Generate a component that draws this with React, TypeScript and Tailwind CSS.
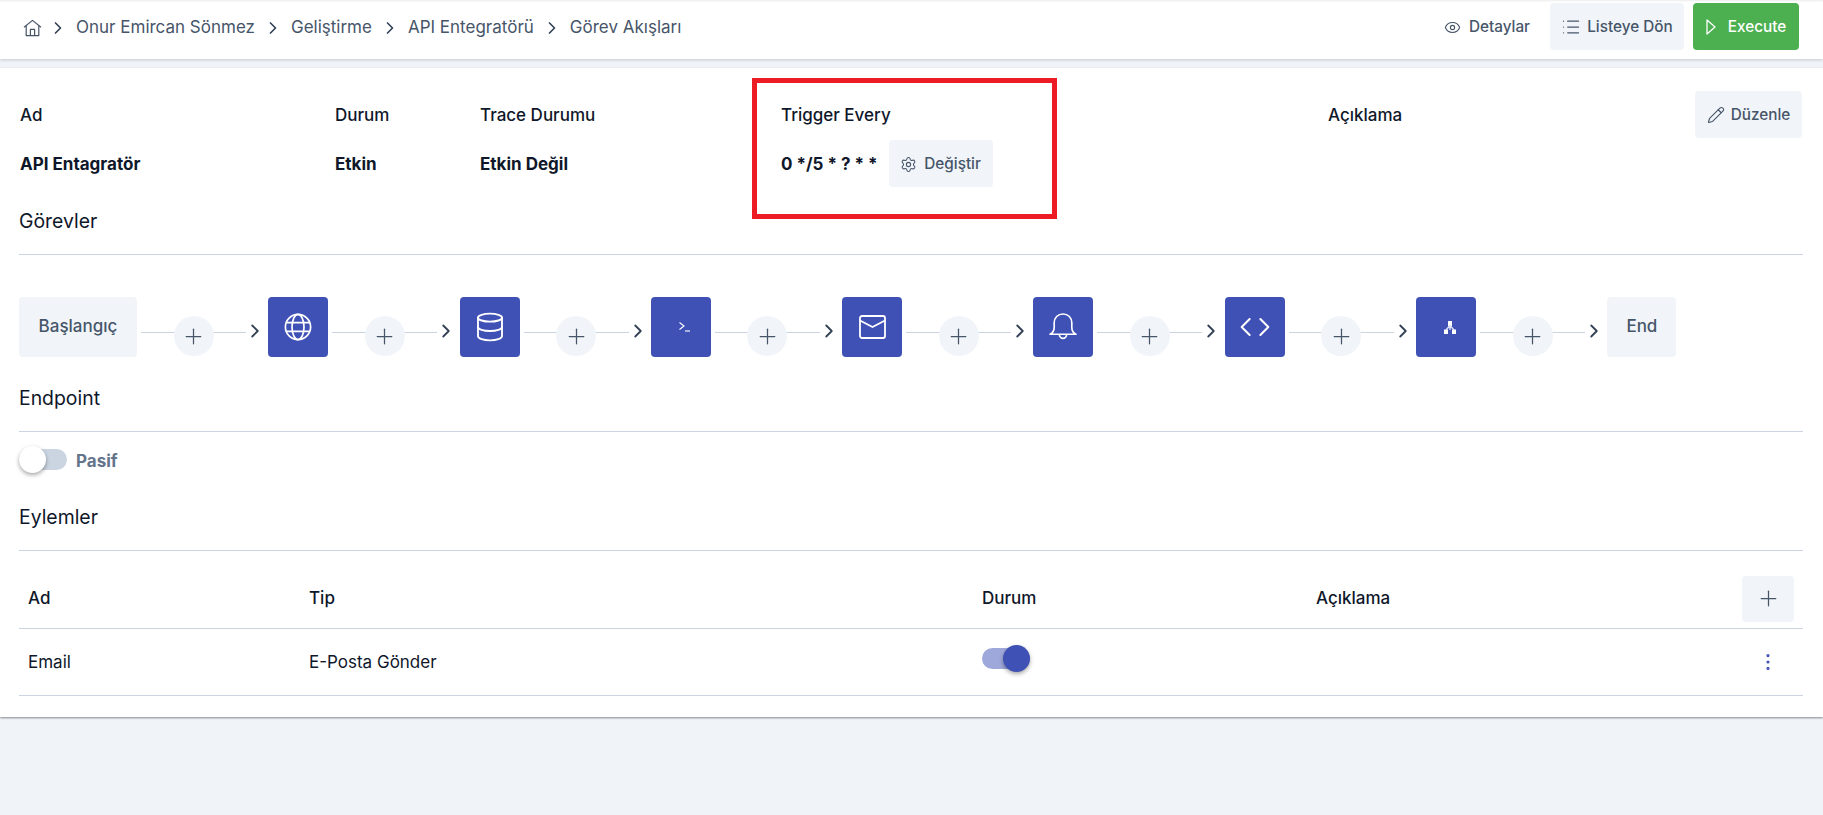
import { ChevronRight, Code, Database, EllipsisVertical, Eye, List, Pencil, Plus, Settings } from "lucide-react";
import type { ReactNode } from "react";

function HomeIcon() {
  return (
    <svg width="19" height="18" viewBox="0 0 19 18" fill="none" stroke="currentColor" strokeWidth="1.2" strokeLinejoin="round" className="-mr-[2px]">
      <path d="M1 8.2 9.5 1.4l8.5 6.8" />
      <path d="M3.2 6.6V16.6h12.6V6.6" />
      <path d="M7.4 16.6V10.4h4.2v6.2" />
    </svg>
  );
}

function PlayIcon() {
  return (
    <svg width="10" height="16" viewBox="0 0 10 16" fill="none" stroke="currentColor" strokeWidth="1.3" strokeLinejoin="round">
      <path d="M1 1v14l8-7z" />
    </svg>
  );
}

function GlobeIcon() {
  return (
    <svg width="28" height="28" viewBox="0 0 28 28" fill="none" stroke="currentColor" strokeWidth="1.7">
      <circle cx="14" cy="14" r="12.6" />
      <ellipse cx="14" cy="14" rx="6" ry="12.6" />
      <path d="M2.6 9.6h22.8M2.6 18.4h22.8" />
    </svg>
  );
}

function MailIcon() {
  return (
    <svg width="27" height="24" viewBox="0 0 27 24" fill="none" stroke="currentColor" strokeWidth="1.8" strokeLinejoin="round">
      <rect x="1" y="1" width="25" height="22" rx="2" />
      <path d="M1 5.5 13.5 12 26 5.5" />
    </svg>
  );
}

function BellIcon() {
  return (
    <svg width="30" height="28" viewBox="0 0 28 27" fill="none" stroke="currentColor" strokeWidth="1.6" strokeLinejoin="round">
      <path d="M1.5 20.5c2.4-1.2 4-2.6 4-6.5V9.5C5.5 4.6 9 1 14 1s8.500 3.600 8.500 8.500V14c0 3.900 1.600 5.300 4 6.500z" />
      <path d="M10.500 20.500a3.500 4 0 0 0 7 0" />
    </svg>
  );
}

function TerminalIcon() {
  return (
    <svg width="11" height="10" viewBox="0 0 11 10" fill="none" stroke="currentColor" strokeWidth="1.1" className="ml-2">
      <path d="M0.500 0.500 5 4 0.500 7.500" />
      <path d="M6 9h5" />
    </svg>
  );
}

function SitemapIcon() {
  return (
    <svg width="12" height="13" viewBox="0 0 12 13" fill="currentColor" className="ml-2">
      <rect x="4" y="0" width="4" height="5" />
      <rect x="0" y="8.500" width="4" height="4.500" />
      <rect x="8" y="8.500" width="4" height="4.500" />
      <path d="M6 5v4M6 4.500 2 9M6 4.500 10 9" stroke="#dfe3f5" strokeWidth="1.4" fill="none" />
    </svg>
  );
}

function GreyButton({ children, className }: { children: ReactNode; className: string }) {
  return (
    <button className={`flex items-center justify-center rounded bg-[#f1f5f9] text-[15.3px] font-medium text-[#475569] ${className}`}>
      {children}
    </button>
  );
}

function Connector() {
  return (
    <div className="flex w-[131.3px] shrink-0 items-start pl-1">
      <div className="relative flex w-[105px] shrink-0 justify-center">
        <div className="mt-[35px] h-px w-full bg-[#cbd5e1]" />
        <div className="absolute top-[19px] flex size-10 items-center justify-center rounded-full bg-[#f1f5f9] text-[#475569]">
          <Plus size={25} strokeWidth={1.2} />
        </div>
      </div>
      <ChevronRight size={22} strokeWidth={2} className="mt-[23px] -ml-[2px] shrink-0 text-[#334155]" />
    </div>
  );
}

function TaskNode({ children }: { children: ReactNode }) {
  return (
    <div className="flex h-[60px] w-[60px] shrink-0 items-center justify-center rounded bg-[#3f51b5] text-white">
      {children}
    </div>
  );
}

function SectionTitle({ children, className }: { children: ReactNode; className: string }) {
  return (
    <div className={`border-b border-[#cbd5e1] pb-[19px] text-[19.4px] leading-[27px] text-[#0f172a] ${className}`}>
      {children}
    </div>
  );
}

function Crumb({ children }: { children: ReactNode }) {
  return (
    <>
      <ChevronRight size={20} strokeWidth={2} className="mx-2 text-[#334155]" />
      <span>{children}</span>
    </>
  );
}

const tasks = [
  <GlobeIcon />,
  <Database size={32} strokeWidth={1.4} />,
  <TerminalIcon />,
  <MailIcon />,
  <BellIcon />,
  <Code size={32} strokeWidth={1.5} />,
  <SitemapIcon />,
];

export default function App() {
  return (
    <div className="relative min-h-[815px] bg-[#f0f4f9] font-['Inter',sans-serif] text-[#0f172a]">
      {/* Header */}
      <div className="flex h-[59px] items-center justify-between bg-white pr-6 pb-[6px] pl-[23px] shadow-[0_1px_3px_rgba(0,0,0,0.18),inset_0_2px_2px_-1px_rgba(0,0,0,0.08)]">
        <div className="mt-[2px] flex items-center text-[17px] text-[#475569]">
          <HomeIcon />
          <Crumb>Onur Emircan Sönmez</Crumb>
          <Crumb>Geliştirme</Crumb>
          <Crumb>API Entegratörü</Crumb>
          <Crumb>Görev Akışları</Crumb>
        </div>
        <div className="flex items-center gap-[9px] text-[15.3px] font-medium">
          <button className="flex h-[47px] items-center gap-[8px] pt-px pr-[11px] text-[#475569]">
            <Eye size={17} strokeWidth={1.6} />
            Detaylar
          </button>
          <GreyButton className="h-[47px] w-[134px] gap-[6px] pt-px">
            <List size={20} strokeWidth={1.5} />
            Listeye Dön
          </GreyButton>
          <button className="flex h-[47px] w-[106px] items-center justify-center gap-[12px] rounded bg-[#4caf50] pt-px text-white">
            <PlayIcon />
            Execute
          </button>
        </div>
      </div>

      {/* Main card */}
      <div className="mt-[9px] h-[649px] bg-white pr-5 pl-[19px] shadow-[0_1px_2px_rgba(0,0,0,0.45)]">
        {/* Summary row */}
        <div className="flex pt-[23px] text-[17px]">
          <div className="w-[316px] shrink-0 pl-px">
            <div className="flex h-[47px] items-center pt-[2px] font-medium">Ad</div>
            <div className="mt-[2px] flex h-[47px] items-center pt-[2px] font-bold">API Entagratör</div>
          </div>
          <div className="w-[145px] shrink-0">
            <div className="flex h-[47px] items-center pt-[2px] font-medium">Durum</div>
            <div className="mt-[2px] flex h-[47px] items-center pt-[2px] font-bold">Etkin</div>
          </div>
          <div className="w-[301px] shrink-0">
            <div className="flex h-[47px] items-center pt-[2px] font-medium">Trace Durumu</div>
            <div className="mt-[2px] flex h-[47px] items-center pt-[2px] font-bold">Etkin Değil</div>
          </div>
          <div className="w-[547px] shrink-0">
            <div className="flex h-[47px] items-center pt-[2px] font-medium">Trigger Every</div>
            <div className="mt-[2px] flex h-[47px] items-center gap-[11px] font-bold">
              <span className="pt-[2px]">0 */5 * ? * *</span>
              <GreyButton className="h-[47px] w-[104px] gap-[7px] pt-px">
                <Settings size={17} strokeWidth={1.5} />
                Değiştir
              </GreyButton>
            </div>
          </div>
          <div className="flex h-[47px] flex-1 items-center pt-[2px] font-medium">Açıklama</div>
          <GreyButton className="mr-px h-[47px] w-[107px] gap-[6px] pt-px">
            <Pencil size={18} strokeWidth={1.5} />
            Düzenle
          </GreyButton>
        </div>

        <SectionTitle className="mt-[21px]">Görevler</SectionTitle>

        {/* Task flow */}
        <div className="mt-[42px] flex h-[60px] items-start">
          <div className="flex h-[60px] w-[118px] shrink-0 items-center justify-center rounded bg-[#f1f5f9] text-[17px] font-medium text-[#475569]">
            Başlangıç
          </div>
          <Connector />
          {tasks.map((icon, i) => (
            <div key={i} className="flex">
              <TaskNode>{icon}</TaskNode>
              <Connector />
            </div>
          ))}
          <div className="flex h-[60px] w-[69px] shrink-0 items-center justify-center rounded bg-[#f1f5f9] text-[17px] font-medium text-[#475569]">
            End
          </div>
        </div>

        <SectionTitle className="mt-7">Endpoint</SectionTitle>

        <div className="mt-[17px] flex h-[21px] items-center">
          <div className="relative h-[21px] w-12 rounded-full bg-[#cbd5e1]">
            <div className="absolute top-[-3px] left-0 size-[27px] rounded-full bg-white shadow-[0_2px_4px_rgba(0,0,0,0.35)]" />
          </div>
          <span className="ml-[9px] pt-1 text-[17px] font-bold text-[#64748b]">Pasif</span>
        </div>

        <SectionTitle className="mt-[34px]">Eylemler</SectionTitle>

        {/* Actions table */}
        <div className="mt-6 flex h-[54px] items-center border-b border-[#cbd5e1] pb-[6px] text-[17px] font-medium">
          <div className="w-[281px] pl-[9px]">Ad</div>
          <div className="w-[673px] pl-[9px]">Tip</div>
          <div className="w-[334px] pl-[9px]">Durum</div>
          <div className="flex-1 pl-[9px]">Açıklama</div>
          <GreyButton className="mr-[9px] h-[46px] w-[52px] shrink-0">
            <Plus size={25} strokeWidth={1.2} />
          </GreyButton>
        </div>
        <div className="flex h-[67px] items-center border-b border-[#cbd5e1] text-[17px]">
          <div className="w-[281px] pt-px pl-[9px]">Email</div>
          <div className="w-[673px] pt-px pl-[9px]">E-Posta Gönder</div>
          <div className="w-[334px] pl-[9px]">
            <div className="relative mb-[7px] h-[21px] w-12 rounded-full bg-[#9fa8da]">
              <div className="absolute top-[-3px] right-0 size-[27px] rounded-full bg-[#3f51b5] shadow-[0_2px_4px_rgba(0,0,0,0.35)]" />
            </div>
          </div>
          <div className="flex-1" />
          <EllipsisVertical size={22} strokeWidth={1.5} className="mr-6 text-[#3f51b5]" />
        </div>
      </div>

      {/* Red highlight around the trigger */}
      <div className="absolute top-[78px] left-[752px] h-[141px] w-[305px] border-[5px] border-[#ed1c24]" />
    </div>
  );
}
